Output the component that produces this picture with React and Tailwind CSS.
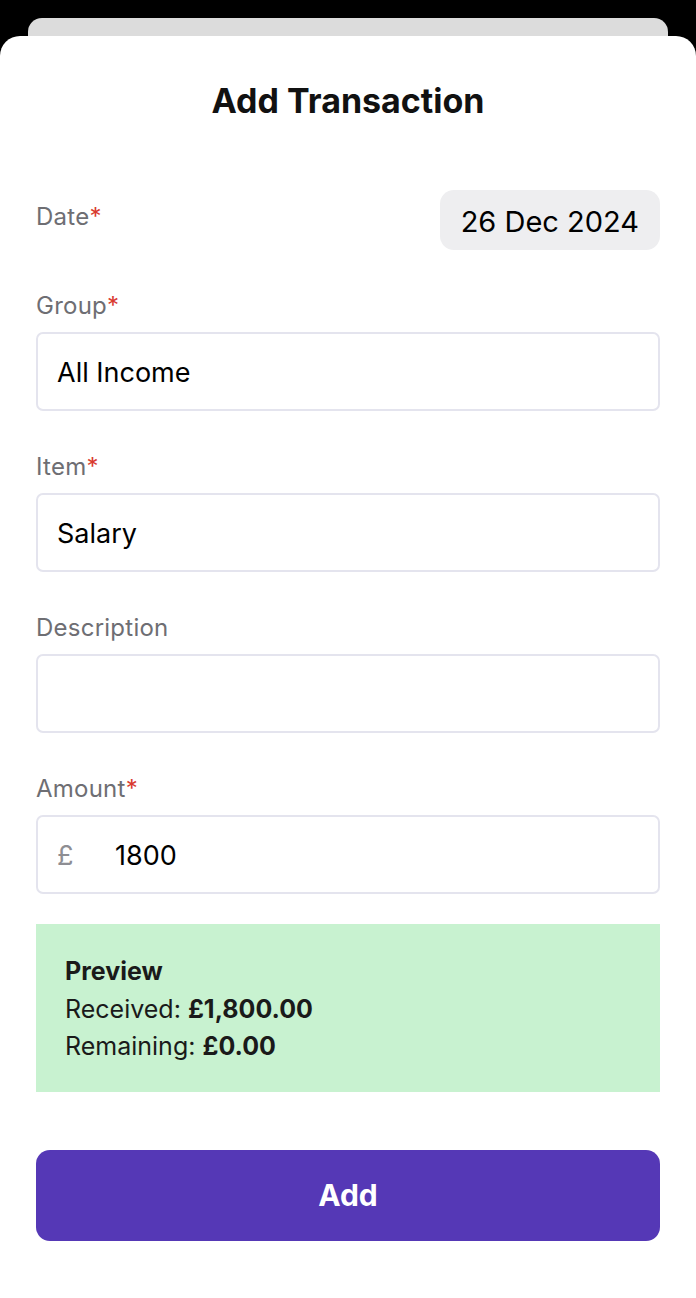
import React from 'react';

const Label = ({ children, required }) => (
    <div className="text-[24px] leading-[28px] tracking-[0.01em] text-[#6e6e73]">
        {children}
        {required && <span className="text-[#d93a30]">*</span>}
    </div>
);

const Field = ({ label, required, value, prefix }) => (
    <div className="flex flex-col gap-3">
        <Label required={required}>{label}</Label>
        <div className="h-[79px] rounded-[7px] border-2 border-[#e4e4ee] bg-white flex items-center px-[19px] pt-[3px] text-[27px] text-black">
            {prefix && <span className="text-[#8e8e93] w-[58px]">{prefix}</span>}
            <span>{value}</span>
        </div>
    </div>
);

export default function App() {
    return (
        <div className="min-h-[1298px] bg-black pt-[18px] font-['Inter',sans-serif] flex flex-col">
            {/* card behind the sheet */}
            <div className="mx-[28px] h-[30px] rounded-t-[14px] bg-[#dcdcdc] -mb-[12px]" />

            {/* sheet */}
            <div className="relative flex-1 bg-white rounded-t-[20px] px-[36px] pt-[44px] pb-10">
                <h1 className="text-center text-[34px] leading-[42px] font-bold text-[#111]">Add Transaction</h1>

                <div className="mt-[68px] flex items-start justify-between">
                    <div className="pt-[13px]">
                        <Label required>Date</Label>
                    </div>
                    <div className="h-[60px] px-[21px] pt-[3px] rounded-[14px] bg-[#eeeef0] flex items-center text-[29px] text-black">
                        26 Dec 2024
                    </div>
                </div>

                <div className="mt-[42px] flex flex-col gap-[42px]">
                    <Field label="Group" required value="All Income" />
                    <Field label="Item" required value="Salary" />
                    <Field label="Description" value="" />
                    <Field label="Amount" required prefix="£" value="1800" />
                </div>

                <div className="mt-[30px] bg-[#c8f2d0] h-[168px] px-[29px] pt-[29px] text-[25px] leading-[37.5px] text-[#1a1a1a]">
                    <div className="font-bold">Preview</div>
                    <div>Received: <span className="font-bold">£1,800.00</span></div>
                    <div>Remaining: <span className="font-bold">£0.00</span></div>
                </div>

                <button className="mt-[58px] w-full h-[91px] rounded-[14px] bg-[#5538b6] text-white text-[30px] font-bold">
                    Add
                </button>
            </div>
        </div>
    );
}
